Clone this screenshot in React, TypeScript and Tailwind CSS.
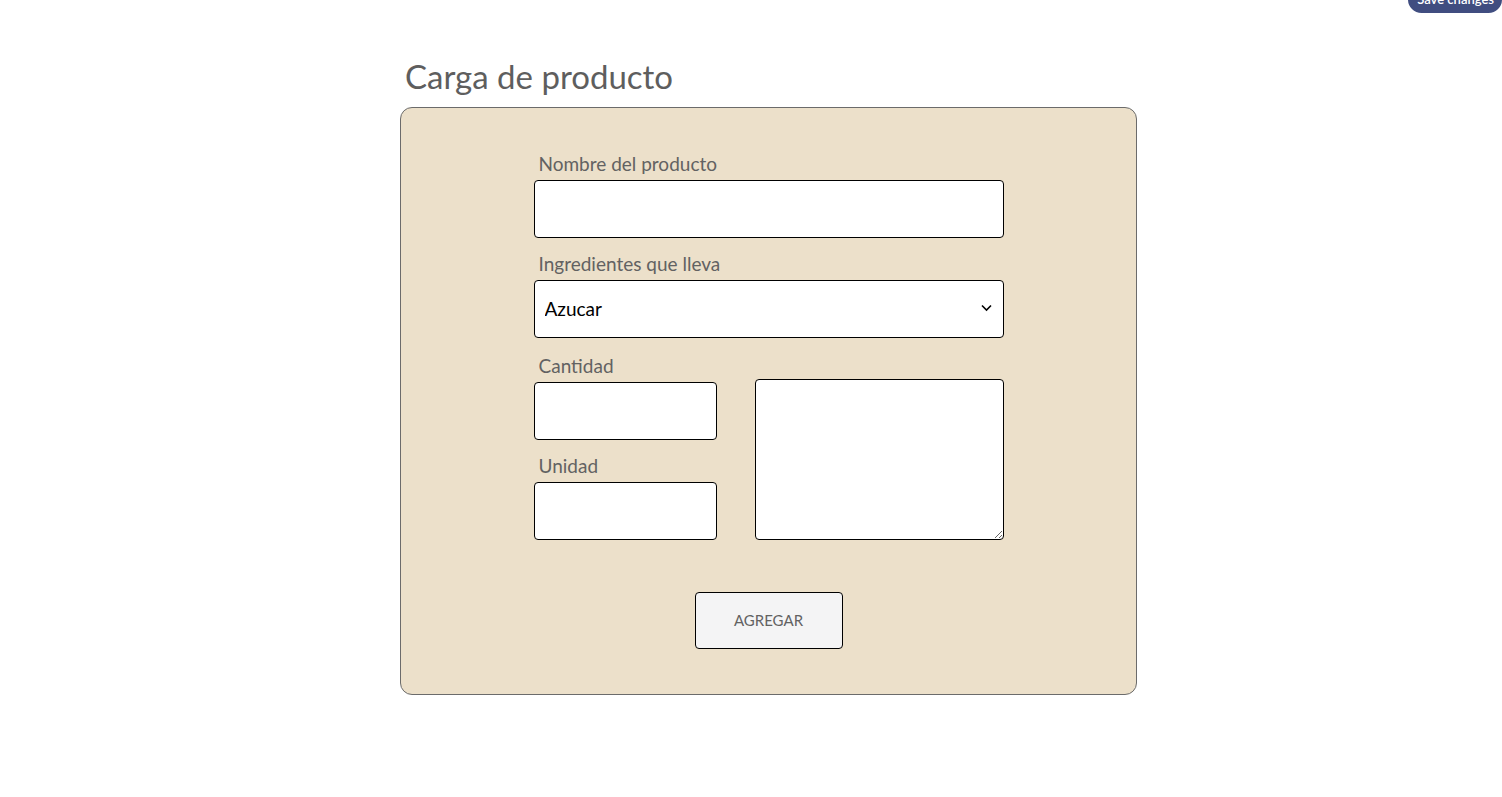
import React, { useState } from "react";

const font = { fontFamily: "Lato, 'Noto Sans', sans-serif" };

function Label({ children }: { children: React.ReactNode }) {
  return (
    <label className="block h-[24px] pl-[5px] text-[19px] leading-[24px] text-[#626262]">
      {children}
    </label>
  );
}

export default function App() {
  const [nombre, setNombre] = useState("");
  const [ingrediente, setIngrediente] = useState("Azucar");

  return (
    <div className="relative min-h-screen w-full bg-white" style={font}>
      {/* floating save button */}
      <button className="absolute right-0 top-[-14px] h-[27px] rounded-full bg-[#404d80] pl-[9px] pr-[8px] text-[13px] font-semibold leading-[27px] text-white">
        Save changes
      </button>

      <div className="ml-[400px] w-[737px] pt-[56px]">
        <h1 className="h-[40px] pl-[5px] text-[33px] leading-[40px] text-[#5e5e5e]">
          Carga de producto
        </h1>

        <div className="mt-[11px] flex h-[588px] flex-col items-center rounded-[12px] border border-[#6b6b6b] bg-[#ece0ca] pt-[44px]">
          <div className="flex w-[470px] flex-col">
            <Label>Nombre del producto</Label>
            <input
              value={nombre}
              onChange={(e) => setNombre(e.target.value)}
              className="mt-[4px] h-[58px] w-full rounded-[4px] border border-black bg-white px-[10px] text-[19px] outline-none"
            />

            <div className="mt-[14px]">
              <Label>Ingredientes que lleva</Label>
            </div>
            <div className="relative mt-[4px]">
              <select
                value={ingrediente}
                onChange={(e) => setIngrediente(e.target.value)}
                className="h-[58px] w-full appearance-none rounded-[4px] border border-black bg-white pl-[10px] pr-[30px] text-[19px] text-black outline-none"
              >
                <option>Azucar</option>
                <option>Harina</option>
                <option>Huevos</option>
                <option>Manteca</option>
              </select>
              <svg
                className="pointer-events-none absolute right-[12px] top-[24px]"
                width="11"
                height="8"
                viewBox="0 0 11 8"
                fill="none"
              >
                <path d="M1 1.5 L5.5 6 L10 1.5" stroke="black" strokeWidth="1.6" />
              </svg>
            </div>

            <div className="mt-[16px] flex items-end justify-between">
              <div className="flex w-[183px] flex-col">
                <Label>Cantidad</Label>
                <input className="mt-[4px] h-[58px] w-full rounded-[4px] border border-black bg-white px-[10px] outline-none" />
                <div className="mt-[14px]">
                  <Label>Unidad</Label>
                </div>
                <input className="mt-[4px] h-[58px] w-full rounded-[4px] border border-black bg-white px-[10px] outline-none" />
              </div>
              <textarea className="h-[161px] w-[249px] rounded-[4px] border border-black bg-white p-[8px] outline-none" />
            </div>

            <div className="mt-[52px] flex justify-center">
              <button className="h-[57px] w-[148px] rounded-[4px] border border-black bg-[#f4f4f5] text-[15px] text-[#626262]">
                AGREGAR
              </button>
            </div>
          </div>
        </div>
      </div>
    </div>
  );
}
